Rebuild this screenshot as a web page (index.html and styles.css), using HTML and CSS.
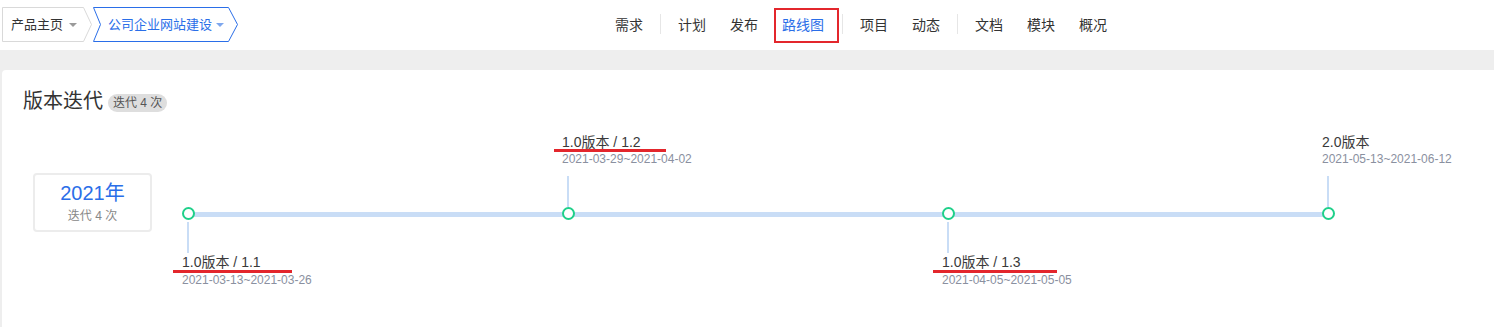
FILE: index.html
```html
<!DOCTYPE html>
<html lang="zh-CN">
<head>
<meta charset="utf-8">
<title>路线图</title>
<link rel="stylesheet" href="styles.css">
</head>
<body>
<header class="topbar">
  <div class="crumbs">
    <a class="crumb crumb-home">
      <svg class="crumb-bg" width="90" height="35" viewBox="0 0 90 35"><polygon points="0.5,0.5 81.5,0.5 89.5,17.5 81.5,34.5 0.5,34.5" fill="#fff" stroke="#d9d9d9"/></svg>
      <span class="crumb-text">产品主页</span><i class="caret"></i>
    </a>
    <a class="crumb crumb-project">
      <svg class="crumb-bg" width="146" height="35" viewBox="0 0 146 35"><polygon points="0.5,0.5 135.5,0.5 144.5,17.5 135.5,34.5 0.5,34.5 7.5,17.5" fill="#fff" stroke="#2a6ee8"/></svg>
      <span class="crumb-text">公司企业网站建设</span><i class="caret caret-blue"></i>
    </a>
  </div>
  <nav class="nav">
    <a class="nav-item">需求</a>
    <span class="nav-sep"></span>
    <a class="nav-item">计划</a>
    <a class="nav-item">发布</a>
    <a class="nav-item nav-active">路线图</a>
    <span class="nav-sep nav-sep-tight"></span>
    <a class="nav-item">项目</a>
    <a class="nav-item">动态</a>
    <span class="nav-sep"></span>
    <a class="nav-item">文档</a>
    <a class="nav-item">模块</a>
    <a class="nav-item">概况</a>
  </nav>
</header>

<main class="main">
  <section class="card">
    <div class="card-head">
      <h2 class="card-title">版本迭代</h2>
      <span class="badge">迭代 4 次</span>
    </div>

    <div class="roadmap">
      <div class="year-box">
        <div class="year">2021年</div>
        <div class="year-count">迭代 4 次</div>
      </div>

      <div class="track">
        <div class="stop stop-down">
          <div class="slot-top"></div>
          <div class="node-row"><span class="node"></span></div>
          <div class="slot-bottom">
            <div class="stem"></div>
            <div class="label">
              <div class="label-title">1.0版本 / 1.1<span class="mark mark-down" style="left:-9px;width:119px"></span></div>
              <div class="label-date">2021-03-13~2021-03-26</div>
            </div>
          </div>
        </div>

        <div class="stop stop-up">
          <div class="slot-top">
            <div class="label">
              <div class="label-title">1.0版本 / 1.2<span class="mark mark-up" style="left:-8px;width:112px"></span></div>
              <div class="label-date">2021-03-29~2021-04-02</div>
            </div>
            <div class="stem"></div>
          </div>
          <div class="node-row"><span class="node"></span></div>
          <div class="slot-bottom"></div>
        </div>

        <div class="stop stop-down">
          <div class="slot-top"></div>
          <div class="node-row"><span class="node"></span></div>
          <div class="slot-bottom">
            <div class="stem"></div>
            <div class="label">
              <div class="label-title">1.0版本 / 1.3<span class="mark mark-down" style="left:-9px;width:124px"></span></div>
              <div class="label-date">2021-04-05~2021-05-05</div>
            </div>
          </div>
        </div>

        <div class="stop stop-up stop-last">
          <div class="slot-top">
            <div class="label">
              <div class="label-title">2.0版本</div>
              <div class="label-date">2021-05-13~2021-06-12</div>
            </div>
            <div class="stem"></div>
          </div>
          <div class="node-row"><span class="node"></span></div>
          <div class="slot-bottom"></div>
        </div>
      </div>
    </div>
  </section>
</main>
</body>
</html>
```

FILE: styles.css
```css
* {
  box-sizing: border-box;
}

html, body {
  margin: 0;
  padding: 0;
}

body {
  background: #eeeeee;
  font-family: "Liberation Sans", "Noto Sans CJK SC", sans-serif;
  color: #333;
  overflow: hidden;
  height: 327px;
}

a {
  text-decoration: none;
}

/* ---------- top bar ---------- */
.topbar {
  height: 50px;
  background: #fff;
  display: flex;
  align-items: flex-start;
}

.crumbs {
  display: flex;
  margin-top: 7px;
  margin-left: 2px;
}

.crumb {
  position: relative;
  height: 35px;
  display: flex;
  align-items: center;
  font-size: 13px;
  line-height: 35px;
}

.crumb-bg {
  position: absolute;
  left: 0;
  top: 0;
}

.crumb-text,
.caret {
  position: relative;
}

.crumb-home {
  width: 91px;
  padding-left: 9px;
  color: #333;
}

.crumb-project {
  width: 146px;
  padding-left: 15px;
  color: #2a6ee8;
}

.caret {
  display: inline-block;
  width: 0;
  height: 0;
  margin-left: 6px;
  margin-top: 1px;
  border-left: 4px solid transparent;
  border-right: 4px solid transparent;
  border-top: 4px solid #9a9a9a;
}

.caret-blue {
  margin-left: 4px;
  border-top-color: #7ea7ee;
}

.nav {
  display: flex;
  align-items: flex-start;
  margin-left: 364px;
  padding-top: 8px;
}

.nav-item {
  height: 35px;
  line-height: 35px;
  padding: 0 12px;
  font-size: 14px;
  color: #333;
}

.nav-active {
  color: #2a6ee8;
  border: 2px solid #e3262c;
  line-height: 31px;
  padding: 0 13px 0 6px;
  margin-left: 4px;
}

.nav-sep {
  width: 1px;
  height: 20px;
  margin: 6px 5px 0;
  background: #e6e6e6;
}

.nav-sep-tight {
  margin-left: 3px;
}

/* ---------- main ---------- */
.main {
  padding: 20px 0 0 2px;
}

.card {
  background: #fff;
  border-radius: 4px 0 0 0;
  min-height: 257px;
  padding: 21px 0 0 21px;
}

.card-head {
  display: flex;
  align-items: flex-start;
}

.card-title {
  margin: 0;
  font-size: 20px;
  line-height: 20px;
  font-weight: normal;
  color: #333;
}

.badge {
  margin-left: 5px;
  margin-top: 3px;
  height: 18px;
  line-height: 18px;
  padding: 0 5px;
  border-radius: 9px;
  background: #dedede;
  font-size: 12px;
  color: #555;
}

/* ---------- roadmap ---------- */
.roadmap {
  display: flex;
  align-items: flex-start;
  margin-top: 22px;
}

.year-box {
  width: 119px;
  height: 59px;
  margin-left: 10px;
  margin-top: 39px;
  border: 2px solid #ececec;
  border-radius: 4px;
  padding-top: 5px;
  text-align: center;
}

.year {
  font-size: 20px;
  line-height: 26px;
  color: #2a6ee8;
}

.year-count {
  margin-top: 2px;
  font-size: 12px;
  line-height: 16px;
  color: #888;
}

.track {
  display: grid;
  grid-template-columns: 380px 380px 380px auto;
  margin-left: 30px;
}

.stop {
  display: flex;
  flex-direction: column;
}

.slot-top {
  height: 73px;
  display: flex;
  flex-direction: column;
}

.stem {
  width: 2px;
  height: 31px;
  margin-left: 5px;
  background: #c9ddf6;
}

.slot-top .stem {
  margin-top: 10px;
}

.slot-bottom .stem {
  margin-top: 2px;
}

.node-row {
  position: relative;
  height: 13px;
}

.node-row::before {
  content: "";
  position: absolute;
  left: 6px;
  top: 5px;
  width: 380px;
  height: 5px;
  background: #c9ddf6;
}

.stop-last .node-row::before {
  display: none;
}

.node {
  position: absolute;
  left: 0;
  top: 0;
  width: 13px;
  height: 13px;
  border-radius: 50%;
  border: 2px solid #1fd08a;
  background: #fff;
  z-index: 1;
}

.label-title {
  position: relative;
  font-size: 14px;
  line-height: 16px;
  color: #3a3a3a;
  white-space: nowrap;
}

.label-date {
  margin-top: 2px;
  font-size: 12px;
  line-height: 14px;
  color: #8a90a0;
  white-space: nowrap;
}

.slot-bottom .label {
  margin-top: 1px;
}

.slot-bottom .label-date {
  margin-top: 3px;
}

.mark {
  position: absolute;
  height: 3px;
  background: #e3262c;
}

.mark-up {
  top: 15px;
}

.mark-down {
  top: 16px;
}
```
